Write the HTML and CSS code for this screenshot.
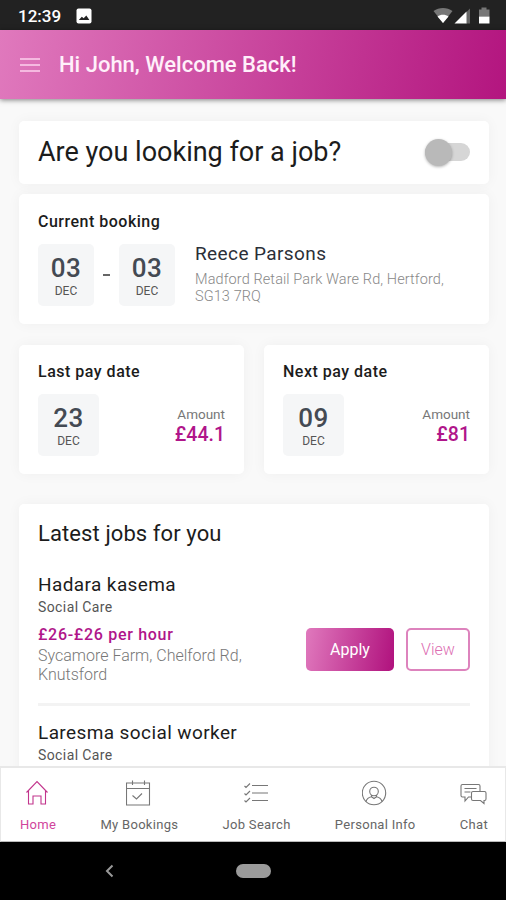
FILE: index.html
```
<!DOCTYPE html>
<html lang="en">
<head>
    <meta charset="UTF-8">
    <title>Home</title>
    <link rel="stylesheet" href="styles.css">
</head>
<body>
    <div class="status-bar">
        <span class="clock">12:39</span>
        <svg class="status-picture" width="16" height="16" viewBox="0 0 16 16">
            <rect x="0.5" y="0.5" width="15" height="15" rx="2" fill="#fff"/>
            <path d="M2.8 12 L5.8 8.8 L7.7 10.3 L10.3 7.5 L13.4 12 Z" fill="#222"/>
        </svg>
        <svg class="status-signal" width="58" height="18" viewBox="0 0 58 18">
            <path d="M0.5 4 C6 0 14 0 19.5 4 L10 16 Z" fill="#777"/>
            <path d="M4.500 9.500 C7.500 7 12.500 7 15.500 9.500 L10 16 Z" fill="#fff"/>
            <path d="M37 1.500 V16.500 H33 V5.500 Z" fill="#666"/>
            <path d="M33.500 4.500 V16.500 H21.500 Z" fill="#fff"/>
            <path d="M48.500 0.500 H53.500 V2.500 H56.500 V9.500 H46 V2.500 H48.500 Z" fill="#777"/>
            <path d="M46 9.500 H56.500 V16.500 H46 Z" fill="#fff"/>
        </svg>
    </div>

    <div class="header">
        <div class="menu-button">
            <span></span>
            <span></span>
            <span></span>
        </div>
        <h1>Hi John, Welcome Back!</h1>
    </div>

    <div class="content">
        <div class="card looking">
            <h2>Are you looking for a job?</h2>
            <div class="toggle"><span class="knob"></span></div>
        </div>

        <div class="card booking">
            <h3>Current booking</h3>
            <div class="booking-row">
                <div class="date"><b>03</b><span>DEC</span></div>
                <span class="dash"></span>
                <div class="date"><b>03</b><span>DEC</span></div>
                <div class="place">
                    <h4>Reece Parsons</h4>
                    <p>Madford Retail Park Ware Rd, Hertford, SG13 7RQ</p>
                </div>
            </div>
        </div>

        <div class="pay">
            <div class="card pay-card">
                <h3>Last pay date</h3>
                <div class="pay-row">
                    <div class="date wide"><b>23</b><span>DEC</span></div>
                    <div class="amount"><span>Amount</span><b>£44.1</b></div>
                </div>
            </div>
            <div class="card pay-card">
                <h3>Next pay date</h3>
                <div class="pay-row">
                    <div class="date wide"><b>09</b><span>DEC</span></div>
                    <div class="amount"><span>Amount</span><b>£81</b></div>
                </div>
            </div>
        </div>

        <div class="card jobs">
            <h2>Latest jobs for you</h2>
            <div class="job">
                <h4>Hadara kasema</h4>
                <p class="sector">Social Care</p>
                <div class="job-row">
                    <div class="job-info">
                        <p class="rate">£26-£26 per hour</p>
                        <p class="address">Sycamore Farm, Chelford Rd, Knutsford</p>
                    </div>
                    <button class="apply">Apply</button>
                    <button class="view">View</button>
                </div>
            </div>
            <div class="job">
                <h4>Laresma social worker</h4>
                <p class="sector">Social Care</p>
            </div>
        </div>
    </div>

    <div class="tab-bar">
        <div class="tab active">
            <svg width="26" height="26" viewBox="0 0 26 26">
                <path d="M1.500 12.500 L12 1.500 L22.500 12.500 M3.500 11 V24 H8 V16 H16 V24 H20.500 V11"/>
            </svg>
            <span>Home</span>
        </div>
        <div class="tab">
            <svg width="26" height="26" viewBox="0 0 26 26">
                <path d="M0.500 3 H23.500 V25 H0.500 Z M0.500 8.500 H23.500 M6.500 0.500 V5 M18.500 0.500 V5 M6.500 15.500 L10.500 19 L16 13.500"/>
            </svg>
            <span>My Bookings</span>
        </div>
        <div class="tab">
            <svg width="26" height="26" viewBox="0 0 26 26">
                <path d="M8 5.500 H24 M8 13 H24 M8 20.500 H24 M0.500 6 L2 7.500 L6 3.500 M0.500 13.500 L2 15 L6 11 M0.500 20.500 L2 22 L6 18"/>
            </svg>
            <span>Job Search</span>
        </div>
        <div class="tab">
            <svg width="26" height="26" viewBox="0 0 26 26">
                <circle cx="12" cy="13" r="11.700"/>
                <circle cx="12" cy="11.500" r="4.300"/>
                <path d="M4 21.500 C5 18 7.500 17.200 9.500 16.800 V15 M20 21.500 C19 18 16.500 17.200 14.500 16.800 V15 M9.500 16.800 L12 18.500 L14.500 16.800"/>
            </svg>
            <span>Personal Info</span>
        </div>
        <div class="tab">
            <svg width="28" height="26" viewBox="0 0 28 26">
                <path d="M11 17 H8.500 L5 21 V17 H2.500 Q1 17 1 15.500 V6 Q1 4.500 2.500 4.500 H18.500 Q20 4.500 20 6 V11 M4.500 8.500 H16.500 M4.500 12 H10.500"/>
                <path d="M13 11.500 H24.500 Q26 11.500 26 13 V19 Q26 20.500 24.500 20.500 H24 V23.500 L20.500 20.500 H13 Q11.500 20.500 11.500 19 V13 Q11.500 11.500 13 11.500 Z"/>
            </svg>
            <span>Chat</span>
        </div>
    </div>

    <div class="nav-bar">
        <svg width="10" height="16" viewBox="0 0 10 16">
            <path d="M7.500 2.500 L2 8 L7.500 13.500" fill="none" stroke="#999" stroke-width="2"/>
        </svg>
        <span class="pill"></span>
    </div>
</body>
</html>
```
FILE: styles.css
```
* {
    box-sizing: border-box;
}

body {
    margin: 0;
    height: 900px;
    display: flex;
    flex-direction: column;
    overflow: hidden;
    background-color: #f9f9f9;
    color: #1c1c1c;
    font-family: Roboto, sans-serif;
}

h1, h2, h3, h4, p {
    margin: 0;
    font-weight: 400;
    white-space: nowrap;
}

.status-bar {
    height: 30px;
    flex: none;
    display: flex;
    align-items: center;
    padding: 1px 15px 0 18px;
    background-color: #222;
    color: #fff;
}

.clock {
    font-size: 17px;
    font-weight: 500;
    line-height: 20px;
    width: 58px;
}

.status-signal {
    margin-left: auto;
}

.header {
    height: 69px;
    flex: none;
    display: flex;
    align-items: center;
    padding-left: 20px;
    background: linear-gradient(100deg, #e079bd, #b3157f);
    box-shadow: 0 1px 5px rgba(0, 0, 0, 0.5);
    color: #fff;
    z-index: 1;
}

.menu-button {
    width: 39px;
    display: flex;
    flex-direction: column;
    gap: 4px;
}

.menu-button span {
    width: 20px;
    height: 2px;
    background-color: #f5b9e0;
}

.header h1 {
    font-size: 22px;
    font-weight: 500;
    color: #fff0fa;
}

.content {
    flex: 1;
    min-height: 0;
    overflow: hidden;
    padding: 22px 17px 0 19px;
}

.card {
    background-color: #fff;
    border-radius: 5px;
    box-shadow: 0 0 14px rgba(0, 0, 0, 0.045);
}

.looking {
    height: 63px;
    display: flex;
    align-items: center;
    justify-content: space-between;
    padding: 0 19px 1px;
}

.looking h2 {
    font-size: 27px;
    line-height: 32px;
}

.toggle {
    width: 45px;
    height: 18px;
    border-radius: 9px;
    background-color: #d6d6d6;
    display: flex;
    align-items: center;
}

.knob {
    flex: none;
    width: 27px;
    height: 27px;
    border-radius: 50%;
    background-color: #b9b9b9;
    box-shadow: 0 1px 3px rgba(0, 0, 0, 0.3);
}

.card h3 {
    font-size: 16px;
    font-weight: 500;
    line-height: 20px;
    letter-spacing: 0.5px;
}

.booking {
    height: 130px;
    margin-top: 10px;
    padding: 18px 19px;
}

.booking-row {
    display: flex;
    margin-top: 12px;
}

.date {
    width: 56px;
    height: 62px;
    padding-top: 10px;
    border-radius: 5px;
    background-color: #f5f6f7;
    text-align: center;
}

.date.wide {
    width: 61px;
}

.date b {
    display: block;
    font-size: 26px;
    font-weight: 500;
    line-height: 29px;
    letter-spacing: 0.5px;
    color: #444a53;
}

.date span {
    display: block;
    font-size: 12px;
    line-height: 16px;
    color: #555;
}

.dash {
    width: 7px;
    height: 2px;
    margin: 30px 9px 0;
    background-color: #666;
}

.place {
    margin-left: 20px;
}

.place h4 {
    margin-top: -2px;
    font-size: 19px;
    line-height: 24px;
    color: #2b2f38;
    letter-spacing: 0.4px;
}

.place p {
    width: 260px;
    margin-top: 5px;
    font-size: 14.500px;
    font-weight: 300;
    line-height: 17px;
    white-space: normal;
    color: #888;
    letter-spacing: 0.1px;
}

.pay {
    display: grid;
    grid-template-columns: 1fr 1fr;
    gap: 20px;
    margin-top: 21px;
}

.pay-card {
    height: 129px;
    padding: 17px 19px;
}

.pay-row {
    display: flex;
    justify-content: space-between;
    margin-top: 12px;
}

.amount {
    padding-top: 11px;
    text-align: right;
}

.amount span {
    display: block;
    font-size: 13.500px;
    line-height: 18px;
    color: #777;
}

.amount b {
    display: block;
    font-size: 19.500px;
    font-weight: 500;
    line-height: 24px;
    color: #b0158a;
}

.jobs {
    height: 400px;
    margin-top: 30px;
    padding: 17px 19px;
}

.jobs h2 {
    font-size: 22px;
    line-height: 26px;
    letter-spacing: 0.1px;
}

.job {
    height: 133px;
    margin-top: 26px;
    border-bottom: 3px solid #f3f3f3;
}

.job + .job {
    margin-top: 15px;
}

.job h4 {
    font-size: 19px;
    line-height: 24px;
    letter-spacing: 0.4px;
}

.sector {
    font-size: 14px;
    line-height: 20px;
    letter-spacing: 0.4px;
    color: #555;
}

.job-row {
    display: flex;
}

.job-info {
    flex: 1;
    padding-top: 8px;
}

.rate {
    font-size: 16px;
    font-weight: 500;
    line-height: 20px;
    letter-spacing: 0.7px;
    color: #b0158a;
}

.address {
    width: 215px;
    margin-top: 1px;
    font-size: 16px;
    font-weight: 300;
    line-height: 19px;
    white-space: normal;
    color: #777;
}

.apply, .view {
    height: 43px;
    margin-top: 11px;
    padding: 0;
    border: none;
    border-radius: 5px;
    font-family: inherit;
    font-size: 16px;
}

.apply {
    width: 88px;
    margin-right: 12px;
    background: linear-gradient(100deg, #e079bd, #b0117d);
    color: #fff;
}

.view {
    width: 64px;
    border: 2px solid #dd83bd;
    background-color: #fff;
    color: #dd6fb3;
    font-weight: 300;
}

.tab-bar {
    height: 76px;
    flex: none;
    display: flex;
    justify-content: space-between;
    padding: 12px 17px 0 19px;
    border: 1px solid #e8e8e8;
    border-top-width: 2px;
    border-bottom-color: #bbb;
    background-color: #fff;
    z-index: 1;
}

.tab {
    display: flex;
    flex-direction: column;
    align-items: center;
    color: #666;
}

.tab svg {
    fill: none;
    stroke: #777;
    stroke-width: 1.100;
}

.tab span {
    margin-top: 11px;
    font-size: 13px;
    line-height: 16px;
    letter-spacing: 0.3px;
}

.tab.active {
    color: #d0449c;
}

.tab.active svg {
    stroke: #c2348c;
}

.nav-bar {
    height: 58px;
    flex: none;
    display: flex;
    align-items: center;
    padding-left: 105px;
    background-color: #000;
}

.pill {
    width: 35px;
    height: 14px;
    margin-left: 121px;
    border-radius: 7px;
    background-color: #9b9b9b;
}
```
